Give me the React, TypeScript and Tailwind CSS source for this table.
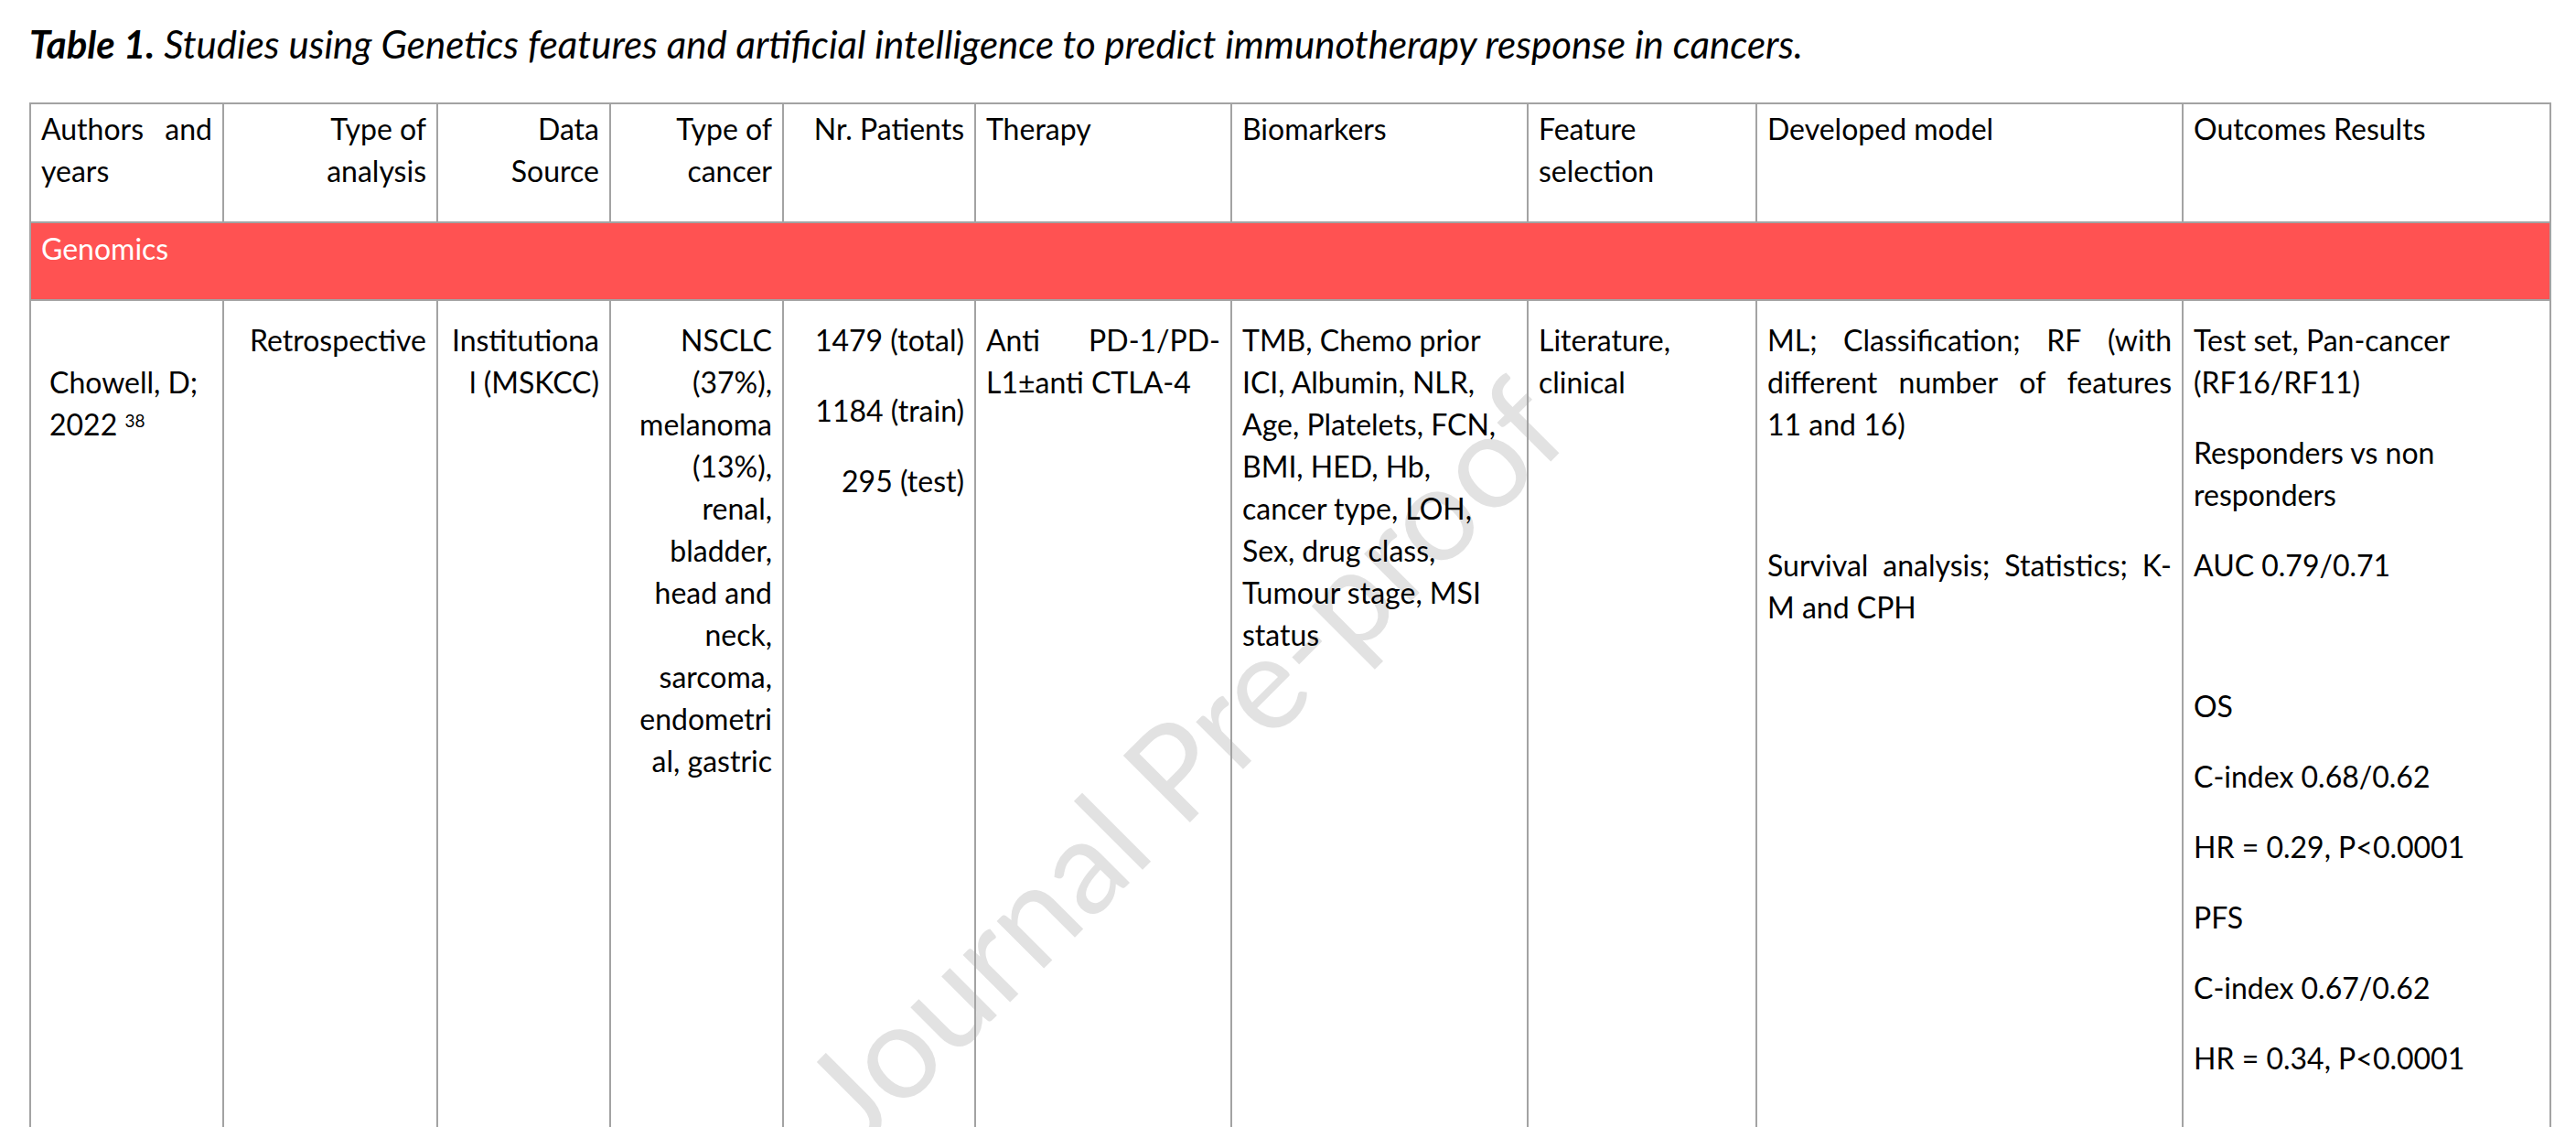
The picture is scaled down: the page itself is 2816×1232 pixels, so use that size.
import React from 'react';

const cell = 'border-2 border-[#a3a3a3] align-top px-[11px]';

function Spread({ text }: { text: string }) {
  return (
    <div className="flex justify-between whitespace-nowrap">
      {text.split(' ').map((w, i) => (
        <span key={i}>{w}</span>
      ))}
    </div>
  );
}

function Lines({ lines, right }: { lines: string[]; right?: boolean }) {
  return (
    <div className={right ? 'text-right' : 'text-left'}>
      {lines.map((l, i) => (
        <div key={i} className="whitespace-nowrap">
          {l === '' ? '\u00a0' : l}
        </div>
      ))}
    </div>
  );
}

const outcomes = [
  ['Test set, Pan-cancer', '(RF16/RF11)'],
  ['Responders vs non', 'responders'],
  ['AUC 0.79/0.71'],
  [''],
  ['OS'],
  ['C-index 0.68/0.62'],
  ['HR = 0.29, P<0.0001'],
  ['PFS'],
  ['C-index 0.67/0.62'],
  ['HR = 0.34, P<0.0001'],
];

export default function App() {
  return (
    <div className="relative h-screen overflow-hidden bg-white font-[Lato,sans-serif] text-black">
      <p className="whitespace-nowrap pl-[32px] pt-[26px] text-[42px] italic leading-[44px]">
        <b>Table 1.</b> Studies using Genetics features and artificial intelligence to predict immunotherapy
        response in cancers.
      </p>

      <div
        className="pointer-events-none absolute left-[1292px] top-[830px] -translate-x-1/2 -translate-y-1/2 -rotate-45 whitespace-nowrap text-[144px] leading-none text-[#e2e2e2]"
      >
        Journal Pre-proof
      </div>

      <table className="relative z-10 mt-[42px] ml-[32px] table-fixed border-collapse text-[32px] leading-[46px]">
        <colgroup>
          <col className="w-[211px]" />
          <col className="w-[234px]" />
          <col className="w-[189px]" />
          <col className="w-[189px]" />
          <col className="w-[210px]" />
          <col className="w-[280px]" />
          <col className="w-[324px]" />
          <col className="w-[250px]" />
          <col className="w-[466px]" />
          <col className="w-[402px]" />
        </colgroup>
        <tbody>
          <tr className="h-[130px]">
            <td className={`${cell} pt-[4px]`}>
              <Spread text="Authors and" />
              <div>years</div>
            </td>
            <td className={`${cell} pt-[4px]`}>
              <Lines right lines={['Type of', 'analysis']} />
            </td>
            <td className={`${cell} pt-[4px]`}>
              <Lines right lines={['Data', 'Source']} />
            </td>
            <td className={`${cell} pt-[4px]`}>
              <Lines right lines={['Type of', 'cancer']} />
            </td>
            <td className={`${cell} pt-[4px]`}>
              <Lines right lines={['Nr. Patients']} />
            </td>
            <td className={`${cell} pt-[4px]`}>
              <Lines lines={['Therapy']} />
            </td>
            <td className={`${cell} pt-[4px]`}>
              <Lines lines={['Biomarkers']} />
            </td>
            <td className={`${cell} pt-[4px]`}>
              <Lines lines={['Feature', 'selection']} />
            </td>
            <td className={`${cell} pt-[4px]`}>
              <Lines lines={['Developed model']} />
            </td>
            <td className={`${cell} pt-[4px]`}>
              <Lines lines={['Outcomes Results']} />
            </td>
          </tr>

          <tr className="h-[85px]">
            <td colSpan={10} className={`${cell} bg-[#ff5252] pt-[5px] text-white`}>
              Genomics
            </td>
          </tr>

          <tr className="h-[1000px]">
            <td className={`${cell} pt-[20px] pl-[20px]`}>
              <div>&nbsp;</div>
              <div className="whitespace-nowrap">Chowell, D;</div>
              <div className="whitespace-nowrap">
                2022 <sup className="text-[19px]">38</sup>
              </div>
            </td>
            <td className={`${cell} pt-[20px]`}>
              <Lines right lines={['Retrospective']} />
            </td>
            <td className={`${cell} pt-[20px]`}>
              <Lines right lines={['Institutiona', 'l (MSKCC)']} />
            </td>
            <td className={`${cell} pt-[20px]`}>
              <Lines
                right
                lines={[
                  'NSCLC',
                  '(37%),',
                  'melanoma',
                  '(13%),',
                  'renal,',
                  'bladder,',
                  'head and',
                  'neck,',
                  'sarcoma,',
                  'endometri',
                  'al, gastric',
                ]}
              />
            </td>
            <td className={`${cell} pt-[20px]`}>
              <div className="flex flex-col gap-[31px] text-right">
                <div>1479 (total)</div>
                <div>1184 (train)</div>
                <div>295 (test)</div>
              </div>
            </td>
            <td className={`${cell} pt-[20px]`}>
              <Spread text="Anti PD-1/PD-" />
              <div className="whitespace-nowrap">L1±anti CTLA-4</div>
            </td>
            <td className={`${cell} pt-[20px]`}>
              <Lines
                lines={[
                  'TMB, Chemo prior',
                  'ICI, Albumin, NLR,',
                  'Age, Platelets, FCN,',
                  'BMI, HED, Hb,',
                  'cancer type, LOH,',
                  'Sex, drug class,',
                  'Tumour stage, MSI',
                  'status',
                ]}
              />
            </td>
            <td className={`${cell} pt-[20px]`}>
              <Lines lines={['Literature,', 'clinical']} />
            </td>
            <td className={`${cell} pt-[20px]`}>
              <div className="flex flex-col gap-[31px]">
                <div>
                  <Spread text="ML; Classification; RF (with" />
                  <Spread text="different number of features" />
                  <div>11 and 16)</div>
                </div>
                <div>&nbsp;</div>
                <div>
                  <Spread text="Survival analysis; Statistics; K-" />
                  <div>M and CPH</div>
                </div>
              </div>
            </td>
            <td className={`${cell} pt-[20px]`}>
              <div className="flex flex-col gap-[31px]">
                {outcomes.map((p, i) => (
                  <Lines key={i} lines={p} />
                ))}
              </div>
            </td>
          </tr>
        </tbody>
      </table>
    </div>
  );
}
